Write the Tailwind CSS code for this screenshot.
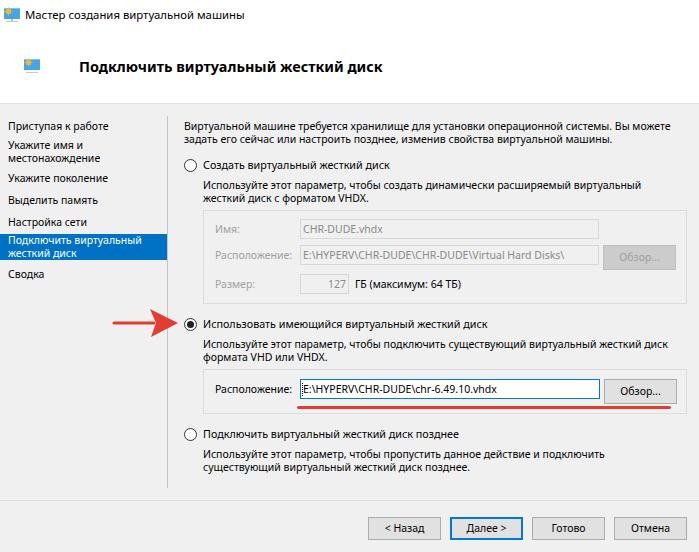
<!DOCTYPE html>
<html lang="ru">
<head>
    <meta charset="UTF-8">
    <title>Мастер создания виртуальной машины</title>
    <script src="https://cdn.jsdelivr.net/npm/@tailwindcss/browser@4"></script>
</head>
<body class="w-[699px] h-[552px] overflow-hidden relative bg-[#f0f0f0] text-black font-['Noto_Sans',sans-serif] text-[10.5px] leading-[13px]">
    <header class="bg-white h-[104px] border-b border-[#dfdfdf]">
        <div class="h-[29px] flex items-center pl-[4px] gap-[5px] text-[11.35px]">
            <svg width="16" height="16" viewBox="0 0 16 16"><rect x="0" y="1" width="16" height="11" fill="#45a5e6"/><rect x="0" y="1" width="16" height="1" fill="#7cc4f2"/><circle cx="4.5" cy="4.5" r="2.5" fill="#f5b82e"/><path d="M4.5 0.5v8M0.5 4.5h8M2 2l5 5M7 2l-5 5" stroke="#f5b82e"/><rect x="7" y="12" width="2" height="2" fill="#b5bcc4"/><rect x="2" y="14" width="12" height="1" fill="#c3cad1"/></svg>
            <span>Мастер создания виртуальной машины</span>
        </div>
        <div class="flex items-center h-[75px] pl-[24px] pb-[1px]">
            <svg width="16" height="16" viewBox="0 0 16 16"><rect x="0" y="1" width="16" height="11" fill="#45a5e6"/><rect x="0" y="1" width="16" height="1" fill="#7cc4f2"/><circle cx="4.5" cy="4.5" r="2.5" fill="#f5b82e"/><path d="M4.5 0.5v8M0.5 4.5h8M2 2l5 5M7 2l-5 5" stroke="#f5b82e"/><rect x="2" y="14" width="12" height="1" fill="#c3cad1"/></svg>
            <h1 class="ml-[39px] text-[14.4px] font-bold">Подключить виртуальный жесткий диск</h1>
        </div>
    </header>

    <main class="h-[396px] flex">
        <nav class="w-[167px] pt-[16px] flex flex-col shrink-0">
            <div class="pl-[8px] h-[13px]">Приступая к работе</div>
            <div class="pl-[8px] mt-[6px]">Укажите имя и<br>местонахождение</div>
            <div class="pl-[8px] mt-[7px]">Укажите поколение</div>
            <div class="pl-[8px] mt-[9px]">Выделить память</div>
            <div class="pl-[8px] mt-[9px]">Настройка сети</div>
            <div class="pl-[8px] mt-[5px] h-[26px] bg-[#0072c6] text-white">Подключить виртуальный<br>жесткий диск</div>
            <div class="pl-[8px] mt-[8px]">Сводка</div>
        </nav>
        <div class="w-px h-[372px] mt-[12px] bg-[#c4c4c4] shrink-0"></div>
        <section class="pl-[16px] pt-[16px] w-[519px]">
            <p class="whitespace-nowrap">Виртуальной машине требуется хранилище для установки операционной системы. Вы можете<br>задать его сейчас или настроить позднее, изменив свойства виртуальной машины.</p>

            <label class="flex items-center mt-[13px] h-[13px]">
                <span class="w-[13px] h-[13px] rounded-full border border-[#333] bg-white"></span>
                <span class="ml-[6px] text-[10.75px]">Создать виртуальный жесткий диск</span>
            </label>
            <p class="ml-[19px] mt-[7px] whitespace-nowrap">Используйте этот параметр, чтобы создать динамически расширяемый виртуальный<br>жесткий диск с форматом VHDX.</p>
            <div class="ml-[19px] mt-[5px] w-[484px] h-[94px] border border-[#dcdcdc] pl-[11px] pt-[8px] text-[#a0a0a0]">
                <div class="flex items-center h-[20px]">
                    <span class="w-[85px]">Имя:</span>
                    <div class="w-[299px] h-[20px] border border-[#d9d9d9] pl-[2px] flex items-center text-[#8a8a8a]">CHR-DUDE.vhdx</div>
                </div>
                <div class="flex items-start mt-[6px]">
                    <span class="w-[85px] leading-[20px]">Расположение:</span>
                    <div class="w-[299px] h-[20px] border border-[#d9d9d9] pl-[2px] flex items-center text-[#8a8a8a]">E:\HYPERV\CHR-DUDE\CHR-DUDE\Virtual Hard Disks\</div>
                    <div class="ml-[4px] w-[73px] h-[25px] bg-[#cccccc] border border-[#bfbfbf] flex items-center justify-center">Обзор...</div>
                </div>
                <div class="flex items-center h-[20px] mt-[4px]">
                    <span class="w-[85px]">Размер:</span>
                    <div class="w-[49px] h-[20px] border border-[#d9d9d9] pr-[2px] flex items-center justify-end text-[#8a8a8a]">127</div>
                    <span class="ml-[6px] text-black">ГБ (максимум: 64 ТБ)</span>
                </div>
            </div>

            <label class="flex items-center mt-[14px] h-[13px]">
                <span class="w-[13px] h-[13px] rounded-full border border-[#333] bg-white flex items-center justify-center"><span class="w-[7px] h-[7px] rounded-full bg-[#222]"></span></span>
                <span class="ml-[6px] text-[10.75px]">Использовать имеющийся виртуальный жесткий диск</span>
            </label>
            <p class="ml-[19px] mt-[7px] whitespace-nowrap">Используйте этот параметр, чтобы подключить существующий виртуальный жесткий диск<br>формата VHD или VHDX.</p>
            <div class="ml-[19px] mt-[5px] w-[484px] h-[45px] border border-[#dcdcdc] pl-[11px] pt-[9px] flex items-start">
                <span class="w-[85px] leading-[20px]">Расположение:</span>
                <div class="w-[300px] h-[20px] bg-white border border-[#0078d7] pl-[1px] flex items-center"><span class="border-l border-dotted border-black">E:\HYPERV\CHR-DUDE\chr-6.49.10.vhdx</span></div>
                <div class="ml-[4px] w-[73px] h-[25px] bg-[#e1e1e1] border border-[#adadad] flex items-center justify-center">Обзор...</div>
            </div>

            <label class="flex items-center mt-[14px] h-[13px]">
                <span class="w-[13px] h-[13px] rounded-full border border-[#333] bg-white"></span>
                <span class="ml-[6px] text-[10.75px]">Подключить виртуальный жесткий диск позднее</span>
            </label>
            <p class="ml-[19px] mt-[7px] whitespace-nowrap">Используйте этот параметр, чтобы пропустить данное действие и подключить<br>существующий виртуальный жесткий диск позднее.</p>
        </section>
    </main>

    <footer class="h-[52px] border-t border-[#dfdfdf] flex justify-end gap-[9px] pr-[12px] pt-[16px]">
        <button class="w-[73px] h-[23px] bg-[#e1e1e1] border border-[#adadad]">&lt; Назад</button>
        <button class="w-[73px] h-[23px] bg-[#e1e1e1] border-2 border-[#0078d7]">Далее &gt;</button>
        <button class="w-[73px] h-[23px] bg-[#e1e1e1] border border-[#adadad]">Готово</button>
        <button class="w-[73px] h-[23px] bg-[#e1e1e1] border border-[#adadad]">Отмена</button>
    </footer>

    <!-- annotations drawn over the window -->
    <svg class="absolute left-[110px] top-[305px]" width="72" height="36" viewBox="0 0 72 36">
        <path d="M4 18H44" stroke="#e53c30" stroke-width="3" stroke-linecap="round"/>
        <path d="M40 4L68 18L41 32L46 18Z" fill="#e53c30"/>
    </svg>
    <div class="absolute left-[297px] top-[406px] w-[374px] h-[3px] bg-[#e53c30] rounded-full"></div>
</body>
</html>
